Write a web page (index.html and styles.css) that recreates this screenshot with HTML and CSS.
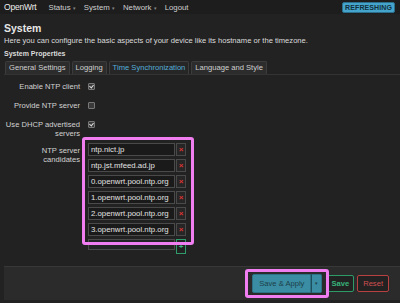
FILE: index.html
```html
<!DOCTYPE html>
<html>
<head>
<meta charset="utf-8">
<link rel="stylesheet" href="styles.css">
</head>
<body>
<header class="topbar">
  <span class="brand">OpenWrt</span>
  <nav class="nav">
    <span class="nav-item">Status <span class="caret">▾</span></span>
    <span class="nav-item">System <span class="caret">▾</span></span>
    <span class="nav-item">Network <span class="caret">▾</span></span>
    <span class="nav-item">Logout</span>
  </nav>
  <span class="badge">REFRESHING</span>
</header>
<main class="main">
  <h2 class="title">System</h2>
  <p class="desc">Here you can configure the basic aspects of your device like its hostname or the timezone.</p>
  <h3 class="section">System Properties</h3>
  <ul class="tabs">
    <li class="tab">General Settings</li>
    <li class="tab">Logging</li>
    <li class="tab active">Time Synchronization</li>
    <li class="tab">Language and Style</li>
  </ul>
  <div class="form">
    <div class="row"><label class="lbl">Enable NTP client</label><span class="cb checked"></span></div>
    <div class="row"><label class="lbl">Provide NTP server</label><span class="cb"></span></div>
    <div class="row row-tall"><label class="lbl">Use DHCP advertised servers</label><span class="cb checked"></span></div>
    <div class="row list-row">
      <label class="lbl">NTP server candidates</label>
      <div class="dynlist">
        <div class="item"><span class="inp">ntp.nict.jp</span><span class="rm">×</span></div>
        <div class="item"><span class="inp">ntp.jst.mfeed.ad.jp</span><span class="rm">×</span></div>
        <div class="item"><span class="inp">0.openwrt.pool.ntp.org</span><span class="rm">×</span></div>
        <div class="item"><span class="inp">1.openwrt.pool.ntp.org</span><span class="rm">×</span></div>
        <div class="item"><span class="inp">2.openwrt.pool.ntp.org</span><span class="rm">×</span></div>
        <div class="item"><span class="inp">3.openwrt.pool.ntp.org</span><span class="rm">×</span></div>
        <div class="item add-row"><span class="inp empty"></span><span class="add">+</span></div>
        <div class="hl hl-list"></div>
      </div>
    </div>
  </div>
  <div class="footer">
    <div class="btn-group">
      <span class="btn apply">Save &amp; Apply</span><span class="btn apply drop">▾</span>
      <div class="hl hl-btn"></div>
    </div>
    <span class="btn save">Save</span>
    <span class="btn reset">Reset</span>
  </div>
</main>
</body>
</html>
```
FILE: styles.css
```css
* { box-sizing: border-box; }
html, body { margin: 0; padding: 0; }
body {
  background: #222222;
  color: #d8d8d8;
  font-family: "Liberation Sans", Arial, sans-serif;
  font-size: 7.5px;
  width: 400px;
  height: 303px;
  overflow: hidden;
}
.topbar {
  display: flex;
  align-items: center;
  height: 14px;
  padding: 0 4px;
  background: #1d1d1d;
}
.brand { font-size: 8.5px; color: #eee; letter-spacing: -0.2px; }
.nav { display: flex; margin-left: 12px; gap: 8px; }
.nav-item { font-size: 7.8px; color: #cfcfcf; }
.caret { font-size: 5px; color: #888; }
.badge {
  margin-left: auto;
  margin-right: 1px;
  background: #45a4cc;
  color: #12303d;
  font-weight: bold;
  font-size: 7px;
  padding: 1px 2px;
  border: 1px solid #2c6f8c;
  border-radius: 2px;
  letter-spacing: 0.1px;
}
.main { padding: 0 0 0 4px; }
.title { margin: 8px 0 0 0; font-size: 10.5px; font-weight: bold; color: #e6e6e6; line-height: 12px; }
.desc { margin: 2px 0 0 0; font-size: 7.6px; line-height: 9px; color: #dcdcdc; }
.section { margin: 4px 0 0 0; font-size: 7px; font-weight: bold; line-height: 9px; color: #dcdcdc; }
.tabs {
  list-style: none;
  margin: 3px 0 0 0;
  padding: 0 0 0 1px;
  display: flex;
  gap: 2px;
  border-bottom: 1px solid #333;
}
.tab {
  font-size: 7.6px;
  line-height: 12px;
  padding: 0 3px;
  background: #2c2c2c;
  border: 1px solid #3c3c3c;
  border-bottom: none;
  border-radius: 2px 2px 0 0;
  color: #d0d0d0;
}
.tab.active { color: #55aedb; background: #262626; }
.form { padding-top: 6px; }
.row { display: flex; align-items: flex-start; height: 19px; }
.row-tall { height: 21px; }
.list-row { height: auto; }
.lbl {
  width: 80px;
  text-align: right;
  padding-right: 4px;
  font-size: 7.6px;
  line-height: 9px;
  color: #d2d2d2;
  padding-top: 1px;
}
.cb {
  width: 7px; height: 7px;
  margin-left: 4px;
  margin-top: 2px;
  border: 1px solid #777;
  border-radius: 1px;
  background: #3a3a3a;
  position: relative;
}
.cb.checked::after {
  content: "";
  position: absolute;
  left: 1px; top: 0px;
  width: 2px; height: 3px;
  border: solid #ddd;
  border-width: 0 1px 1px 0;
  transform: rotate(40deg);
}
.list-row .lbl { padding-top: 6px; }
.dynlist { position: relative; margin-left: 4px; display: flex; flex-direction: column; gap: 3px; padding-top: 3px; }
.item { display: flex; gap: 1px; }
.inp {
  width: 87px;
  height: 13px;
  background: #1a1a1a;
  border: 1px solid #4a4a4a;
  color: #e2e2e2;
  font-size: 7.8px;
  line-height: 11px;
  padding-left: 2px;
}
.rm {
  width: 10px; height: 13px;
  background: #262626;
  border: 1px solid #4a4a4a;
  color: #d33;
  font-size: 8px;
  font-weight: bold;
  line-height: 11px;
  text-align: center;
}
.inp.empty { height: 11px; background: #242424; }
.add {
  width: 10px; height: 15px;
  border: 1px solid #2f9a6a;
  color: #3bb57b;
  font-size: 8px;
  font-weight: bold;
  line-height: 13px;
  text-align: center;
  background: #222;
}
.hl {
  position: absolute;
  border: 3px solid #f07ef0;
  border-radius: 3px;
  pointer-events: none;
}
.hl-list { left: -6px; top: -3px; width: 112px; height: 108px; }
.footer {
  margin-top: 12px;
  height: 34px;
  background: #2b2b2b;
  border-top: 1px solid #383838;
  display: flex;
  align-items: center;
  justify-content: flex-end;
  gap: 3px;
  padding-right: 11px;
}
.btn-group { position: relative; display: flex; margin-right: 1px; }
.btn {
  font-size: 7.6px;
  height: 17px;
  line-height: 15px;
  padding: 0 4px;
  border-radius: 2px;
  border: 1px solid;
}
.apply { background: #3b8da3; border-color: #2c7286; color: #1c3f4a; padding: 0 6px; height: 19px; line-height: 17px; }
.apply:first-child { border-radius: 2px 0 0 2px; }
.drop { border-left: 1px solid #1e4e5c; border-radius: 0 2px 2px 0; padding: 0 3px; font-size: 5px; }
.save { border-color: #2e9a68; color: #37b27a; background: #222; font-weight: bold; }
.reset { border-color: #b84040; color: #d05050; background: #222; padding: 0 5px; }
.hl-btn { left: -7px; top: -5px; width: 84px; height: 29px; }
```
